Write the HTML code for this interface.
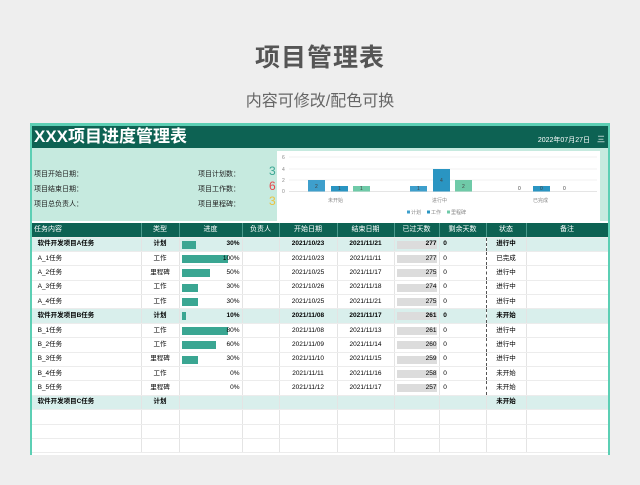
<!DOCTYPE html>
<html><head><meta charset="utf-8"><style>
*{margin:0;padding:0;box-sizing:border-box}
body{width:640px;height:485px;background:#eeeeee;font-family:"Liberation Sans","Noto Sans CJK SC",sans-serif;position:relative;overflow:hidden}
.t1{position:absolute;top:38px;width:640px;text-align:center;font-size:25px;color:#555;font-weight:bold;letter-spacing:1px}
.t2{position:absolute;top:87px;width:640px;text-align:center;font-size:16px;color:#666}
.card{position:absolute;left:30px;top:123px;width:580px;height:332px;background:#fff;border-left:2px solid #5ccfb4;border-right:2px solid #5ccfb4;border-top:3px solid #5ccfb4;overflow:hidden}
.hd{position:absolute;left:0;top:0;width:576px;height:22px;background:#0d6253;color:#fff}
.hd .tt{position:absolute;left:2px;top:0;font-size:17px;font-weight:bold;line-height:22px}
.hd .dt{position:absolute;right:18px;top:9px;font-size:7px}
.hd .mn{position:absolute;right:3px;top:8px;font-size:8px}
.info{position:absolute;left:0;top:22px;width:576px;height:73px;background:#c6eadf}
.lb{position:absolute;font-size:7px;color:#222}
.num{position:absolute;font-size:12px}
.chart{position:absolute;left:245px;top:3px;width:323px;height:70px;background:#fff}
table{position:absolute;left:0;top:97px;border-collapse:collapse;table-layout:fixed;width:576px}
td,th{height:14.4px;line-height:12px;font-size:6.5px;border-right:1px solid #e4e4e4;border-bottom:1px solid #ececec;white-space:nowrap;padding:0 2px;position:relative}
th{background:#0d6253;color:#fff;font-weight:normal;font-size:7px;height:14px;border-right:1px solid #4a9a8c}
tr.g td{background:#d9efec;font-weight:bold}
.c{text-align:center}
.r{text-align:right}
.bar{position:absolute;left:2px;top:3px;height:8px;background:#3aa692}
.gb{position:absolute;left:2px;top:3px;height:8px;background:#dcdcdc;width:40px}
.pv{position:relative}
</style></head><body>
<div class="t1">项目管理表</div>
<div class="t2">内容可修改/配色可换</div>
<div class="card">
<div class="hd"><div class="tt">XXX项目进度管理表</div><div class="dt">2022年07月27日</div><div class="mn">三</div></div>
<div class="info">
<div class="lb" style="left:2px;top:21px">项目开始日期：</div>
<div class="lb" style="left:2px;top:36px">项目结束日期：</div>
<div class="lb" style="left:2px;top:51px">项目总负责人：</div>
<div class="lb" style="left:166px;top:21px">项目计划数：</div>
<div class="lb" style="left:166px;top:36px">项目工作数：</div>
<div class="lb" style="left:166px;top:51px">项目里程碑：</div>
<div class="num" style="left:237px;top:16px;color:#3aa692">3</div>
<div class="num" style="left:237px;top:31px;color:#e8474c">6</div>
<div class="num" style="left:237px;top:46px;color:#e9c341">3</div>
<div class="chart">
<svg width="323" height="70" viewBox="0 0 323 70" font-size="5" fill="#888" font-family="Liberation Sans,Noto Sans CJK SC,sans-serif">
<g stroke="#e6e6e6" stroke-width="0.6"><line x1="12" y1="6" x2="320" y2="6"/><line x1="12" y1="18" x2="320" y2="18"/><line x1="12" y1="29" x2="320" y2="29"/><line x1="12" y1="40.5" x2="320" y2="40.5" stroke="#ccc"/></g>
<text x="5" y="8">6</text><text x="5" y="20">4</text><text x="5" y="31">2</text><text x="5" y="42">0</text>
<rect x="31" y="29" width="17" height="11.5" fill="#3e9fcc"/>
<rect x="54" y="35" width="17" height="5.5" fill="#2a95c2"/>
<rect x="76" y="35" width="17" height="5.5" fill="#6fcaa8"/>
<rect x="133" y="35" width="17" height="5.5" fill="#3e9fcc"/>
<rect x="156" y="18" width="17" height="22.5" fill="#2a95c2"/>
<rect x="178" y="29" width="17" height="11.5" fill="#6fcaa8"/>
<rect x="256" y="35" width="17" height="5.5" fill="#2a95c2"/>
<g fill="#444"><text x="38" y="37">2</text><text x="61" y="39">1</text><text x="83" y="39">1</text><text x="140" y="39">1</text><text x="163" y="31">4</text><text x="185" y="37">2</text><text x="241" y="39">0</text><text x="263" y="39">0</text><text x="286" y="39">0</text></g>
<text x="51" y="51">未开始</text><text x="155" y="51">进行中</text><text x="256" y="51">已完成</text>
<rect x="130" y="59.5" width="3" height="3" fill="#3e9fcc"/><text x="134" y="63">计划</text>
<rect x="150" y="59.5" width="3" height="3" fill="#2a95c2"/><text x="154" y="63">工作</text>
<rect x="170" y="59.5" width="3" height="3" fill="#6fcaa8"/><text x="174" y="63">里程碑</text>
</svg></div>
</div>
<table>
<colgroup><col style="width:109px"><col style="width:38px"><col style="width:63px"><col style="width:37px"><col style="width:58px"><col style="width:57px"><col style="width:45px"><col style="width:47px"><col style="width:40px"><col style="width:82px"></colgroup>
<tr><th style="text-align:left">任务内容</th><th>类型</th><th>进度</th><th>负责人</th><th>开始日期</th><th>结束日期</th><th>已过天数</th><th>剩余天数</th><th>状态</th><th>备注</th></tr>
<tr class="g"><td>&nbsp;&nbsp;软件开发项目A任务</td><td class="c">计划</td><td class="r"><div class="bar" style="width:14px"></div>30%</td><td></td><td class="c">2021/10/23</td><td class="c">2021/11/21</td><td class="r"><div class="gb"></div><span class="pv">277</span></td><td style="border-right:none">&nbsp;0</td><td class="c" style="border-left:1px dashed #555">进行中</td><td></td></tr>
<tr><td>&nbsp;&nbsp;A_1任务</td><td class="c">工作</td><td class="r"><div class="bar" style="width:46px"></div><span class="pv">100%</span></td><td></td><td class="c">2021/10/23</td><td class="c">2021/11/11</td><td class="r"><div class="gb"></div><span class="pv">277</span></td><td style="border-right:none">&nbsp;0</td><td class="c" style="border-left:1px dashed #555">已完成</td><td></td></tr>
<tr><td>&nbsp;&nbsp;A_2任务</td><td class="c">里程碑</td><td class="r"><div class="bar" style="width:28px"></div>50%</td><td></td><td class="c">2021/10/25</td><td class="c">2021/11/17</td><td class="r"><div class="gb"></div><span class="pv">275</span></td><td style="border-right:none">&nbsp;0</td><td class="c" style="border-left:1px dashed #555">进行中</td><td></td></tr>
<tr><td>&nbsp;&nbsp;A_3任务</td><td class="c">工作</td><td class="r"><div class="bar" style="width:16px"></div>30%</td><td></td><td class="c">2021/10/26</td><td class="c">2021/11/18</td><td class="r"><div class="gb"></div><span class="pv">274</span></td><td style="border-right:none">&nbsp;0</td><td class="c" style="border-left:1px dashed #555">进行中</td><td></td></tr>
<tr><td>&nbsp;&nbsp;A_4任务</td><td class="c">工作</td><td class="r"><div class="bar" style="width:16px"></div>30%</td><td></td><td class="c">2021/10/25</td><td class="c">2021/11/21</td><td class="r"><div class="gb"></div><span class="pv">275</span></td><td style="border-right:none">&nbsp;0</td><td class="c" style="border-left:1px dashed #555">进行中</td><td></td></tr>
<tr class="g"><td>&nbsp;&nbsp;软件开发项目B任务</td><td class="c">计划</td><td class="r"><div class="bar" style="width:4px"></div>10%</td><td></td><td class="c">2021/11/08</td><td class="c">2021/11/17</td><td class="r"><div class="gb"></div><span class="pv">261</span></td><td style="border-right:none">&nbsp;0</td><td class="c" style="border-left:1px dashed #555">未开始</td><td></td></tr>
<tr><td>&nbsp;&nbsp;B_1任务</td><td class="c">工作</td><td class="r"><div class="bar" style="width:46px"></div><span class="pv">80%</span></td><td></td><td class="c">2021/11/08</td><td class="c">2021/11/13</td><td class="r"><div class="gb"></div><span class="pv">261</span></td><td style="border-right:none">&nbsp;0</td><td class="c" style="border-left:1px dashed #555">进行中</td><td></td></tr>
<tr><td>&nbsp;&nbsp;B_2任务</td><td class="c">工作</td><td class="r"><div class="bar" style="width:34px"></div>60%</td><td></td><td class="c">2021/11/09</td><td class="c">2021/11/14</td><td class="r"><div class="gb"></div><span class="pv">260</span></td><td style="border-right:none">&nbsp;0</td><td class="c" style="border-left:1px dashed #555">进行中</td><td></td></tr>
<tr><td>&nbsp;&nbsp;B_3任务</td><td class="c">里程碑</td><td class="r"><div class="bar" style="width:16px"></div>30%</td><td></td><td class="c">2021/11/10</td><td class="c">2021/11/15</td><td class="r"><div class="gb"></div><span class="pv">259</span></td><td style="border-right:none">&nbsp;0</td><td class="c" style="border-left:1px dashed #555">进行中</td><td></td></tr>
<tr><td>&nbsp;&nbsp;B_4任务</td><td class="c">工作</td><td class="r">0%</td><td></td><td class="c">2021/11/11</td><td class="c">2021/11/16</td><td class="r"><div class="gb"></div><span class="pv">258</span></td><td style="border-right:none">&nbsp;0</td><td class="c" style="border-left:1px dashed #555">未开始</td><td></td></tr>
<tr><td>&nbsp;&nbsp;B_5任务</td><td class="c">里程碑</td><td class="r">0%</td><td></td><td class="c">2021/11/12</td><td class="c">2021/11/17</td><td class="r"><div class="gb"></div><span class="pv">257</span></td><td style="border-right:none">&nbsp;0</td><td class="c" style="border-left:1px dashed #555">未开始</td><td></td></tr>
<tr class="g"><td>&nbsp;&nbsp;软件开发项目C任务</td><td class="c">计划</td><td></td><td></td><td></td><td></td><td></td><td></td><td class="c">未开始</td><td></td></tr>
<tr><td></td><td></td><td></td><td></td><td></td><td></td><td></td><td></td><td></td><td></td></tr>
<tr><td></td><td></td><td></td><td></td><td></td><td></td><td></td><td></td><td></td><td></td></tr>
<tr><td></td><td></td><td></td><td></td><td></td><td></td><td></td><td></td><td></td><td></td></tr>
</table>
</div>
</body></html>
